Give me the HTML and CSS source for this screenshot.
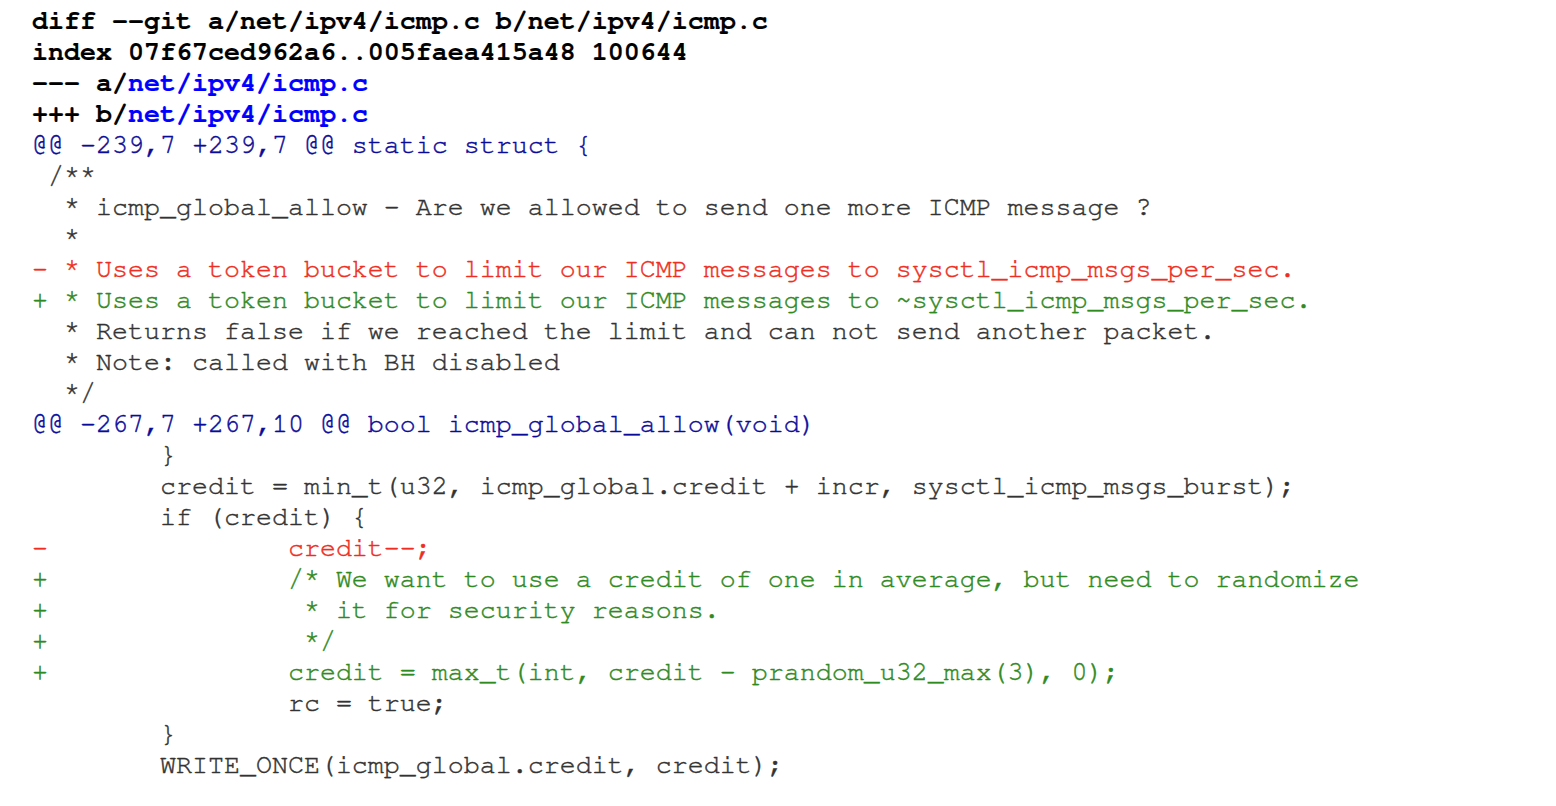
FILE: index.html
```html
<!DOCTYPE html>
<html>
<head>
<meta charset="utf-8">
<link rel="stylesheet" href="styles.css">
</head>
<body>
<div class="diff">
<div class="line meta">diff --git a/net/ipv4/icmp.c b/net/ipv4/icmp.c</div>
<div class="line meta">index 07f67ced962a6..005faea415a48 100644</div>
<div class="line meta">--- a/<span class="file">net/ipv4/icmp.c</span></div>
<div class="line meta">+++ b/<span class="file">net/ipv4/icmp.c</span></div>
<div class="line hunk">@@ -239,7 +239,7 @@ static struct {</div>
<div class="line ctx"> /**</div>
<div class="line ctx">  * icmp_global_allow - Are we allowed to send one more ICMP message ?</div>
<div class="line ctx">  *</div>
<div class="line del">- * Uses a token bucket to limit our ICMP messages to sysctl_icmp_msgs_per_sec.</div>
<div class="line add">+ * Uses a token bucket to limit our ICMP messages to ~sysctl_icmp_msgs_per_sec.</div>
<div class="line ctx">  * Returns false if we reached the limit and can not send another packet.</div>
<div class="line ctx">  * Note: called with BH disabled</div>
<div class="line ctx">  */</div>
<div class="line hunk">@@ -267,7 +267,10 @@ bool icmp_global_allow(void)</div>
<div class="line ctx">        }</div>
<div class="line ctx">        credit = min_t(u32, icmp_global.credit + incr, sysctl_icmp_msgs_burst);</div>
<div class="line ctx">        if (credit) {</div>
<div class="line del">-               credit--;</div>
<div class="line add">+               /* We want to use a credit of one in average, but need to randomize</div>
<div class="line add">+                * it for security reasons.</div>
<div class="line add">+                */</div>
<div class="line add">+               credit = max_t(int, credit - prandom_u32_max(3), 0);</div>
<div class="line ctx">                rc = true;</div>
<div class="line ctx">        }</div>
<div class="line ctx">        WRITE_ONCE(icmp_global.credit, credit);</div>
</div>
</body>
</html>
```
FILE: styles.css
```css
html, body {
  margin: 0;
  padding: 0;
  background: #ffffff;
}
.diff {
  padding: 6px 0 0 32px;
  font-family: "Nimbus Mono PS", "Nimbus Mono L", "FreeMono", "Liberation Mono", "Courier New", monospace;
  font-size: 26.66px;
  line-height: 31px;
  color: #333333;
}
.line {
  white-space: pre;
  -webkit-text-stroke: 0.45px currentColor;
}
.meta {
  font-weight: bold;
  color: #000000;
  -webkit-text-stroke: 0.2px currentColor;
}
.file {
  color: #0000ff;
}
.hunk {
  color: #0b0b99;
}
.ctx {
  color: #333333;
}
.del {
  color: #ee2e22;
}
.add {
  color: #2f8a22;
}
```
